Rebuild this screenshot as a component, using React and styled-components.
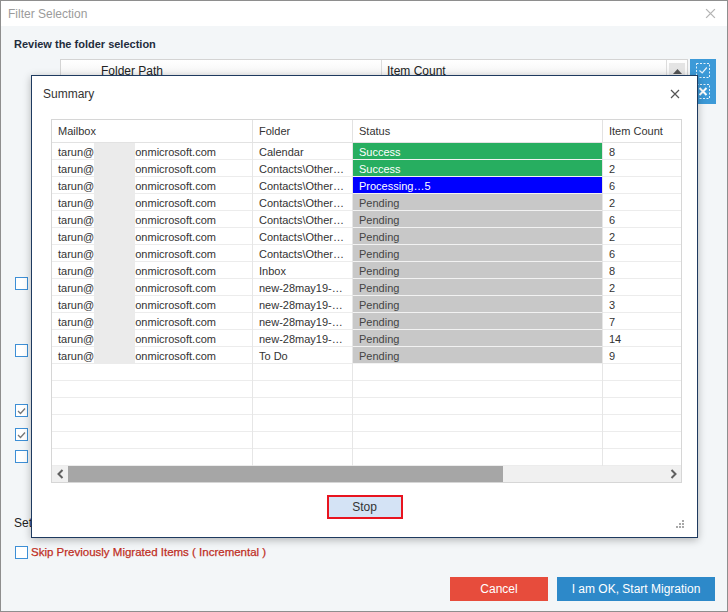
import React from "react";
import styled, { createGlobalStyle } from "styled-components";

const GlobalStyle = createGlobalStyle`
  html, body {
    margin: 0;
    padding: 0;
    background: #fff;
  }
  body {
    font-family: "Liberation Sans", Arial, sans-serif;
  }
  * {
    box-sizing: border-box;
  }
`;

const Window = styled.div`
  position: relative;
  width: 728px;
  height: 612px;
  border: 1px solid #8e8e8e;
  background: #f3f6f8;
  display: flex;
  flex-direction: column;
  overflow: hidden;
`;

const TitleBar = styled.div`
  height: 25px;
  flex-shrink: 0;
  background: #fff;
  display: flex;
  align-items: center;
  justify-content: space-between;
  padding: 0 11px 0 7px;
  color: #9b9b9b;
  font-size: 12px;
`;

const Body = styled.div`
  flex: 1;
  display: flex;
  flex-direction: column;
  padding: 0 11px 0 13px;
`;

const Heading = styled.div`
  margin-top: 10px;
  font-size: 11px;
  font-weight: bold;
  line-height: 16px;
  color: #1f2d3d;
`;

const FolderRow = styled.div`
  display: flex;
  gap: 2px;
  margin: 7px 0 0 46px;
`;

const FolderPanel = styled.div`
  width: 628px;
  height: 200px;
  border: 1px solid #d4d4d4;
  background: #fff;
`;

const PanelHeader = styled.div`
  height: 23px;
  display: flex;
  background: linear-gradient(#ffffff, #f1f1f1);
  border-bottom: 1px solid #e2e2e2;
  font-size: 12px;
  color: #222;
`;

const PanelCol = styled.div`
  width: ${({ $w }) => ($w ? `${$w}px` : "auto")};
  flex: ${({ $w }) => ($w ? "none" : "1")};
  padding-left: ${({ $pl }) => $pl}px;
  border-right: 1px solid #dcdcdc;
  line-height: 23px;
`;

const PanelScroll = styled.div`
  width: 20px;
  display: flex;
  align-items: center;
  justify-content: center;
`;

const ArrowBox = styled.div`
  width: 16px;
  height: 16px;
  background: #e4e4e4;
  display: flex;
  align-items: center;
  justify-content: center;
`;

const IconColumn = styled.div`
  width: 26px;
  height: 45px;
  background: #3c9ad8;
`;

const OptionRow = styled.div`
  display: flex;
  align-items: center;
  gap: 3px;
  margin: ${({ $mt }) => $mt}px 0 0 1px;
  height: ${({ $h }) => $h || 13}px;
`;

const Check = styled.span`
  width: 13px;
  height: 13px;
  flex-shrink: 0;
  border: 1px solid #3d8fd6;
  background: #fff;
  display: flex;
  align-items: center;
  justify-content: center;
`;

const SettingsLabel = styled.div`
  margin-top: 52px;
  font-size: 12px;
  line-height: 16px;
  color: #222;
`;

const SkipLabel = styled.span`
  font-size: 11.5px;
  color: #bf2f25;
  line-height: 16px;
  -webkit-text-stroke: 0.25px #bf2f25;
`;

const Footer = styled.div`
  margin-top: 17px;
  display: flex;
  justify-content: flex-end;
  gap: 9px;
  padding-right: 1px;
`;

const ActionButton = styled.button`
  width: ${({ $w }) => $w}px;
  height: 24px;
  border: none;
  background: ${({ $bg }) => $bg};
  color: #fff;
  font-family: "Liberation Sans", Arial, sans-serif;
  font-size: 12px;
  padding: 0;
`;

/* Summary modal */
const Dialog = styled.div`
  position: absolute;
  left: 30px;
  top: 74px;
  width: 667px;
  height: 463px;
  border: 1px solid #1e3a5f;
  background: #fff;
  box-shadow: 0 2px 8px rgba(0, 0, 0, 0.28);
  display: flex;
  flex-direction: column;
`;

const DialogHeader = styled.div`
  height: 36px;
  flex-shrink: 0;
  display: flex;
  align-items: center;
  justify-content: space-between;
  padding: 0 17px 0 11px;
  font-size: 12px;
  color: #333;
`;

const Grid = styled.div`
  width: 631px;
  height: 364px;
  margin: 7px 0 0 19px;
  border: 1px solid #d6d6d6;
  display: flex;
  flex-direction: column;
  overflow: hidden;
`;

const Row = styled.div`
  display: flex;
  height: ${({ $h }) => $h || 17}px;
  flex-shrink: 0;
`;

const HeadCell = styled.div`
  width: ${({ $w }) => $w}px;
  flex-shrink: 0;
  padding-left: 6px;
  border-right: 1px solid #e2e2e2;
  border-bottom: 1px solid #e2e2e2;
  line-height: 22px;
  font-size: 11px;
  color: #333;
  white-space: nowrap;
  overflow: hidden;
`;

const Cell = styled.div`
  width: ${({ $w }) => $w}px;
  flex-shrink: 0;
  display: flex;
  padding-left: 6px;
  border-right: 1px solid #e6e6e6;
  background: linear-gradient(
    to top,
    ${({ $line }) => $line || "#ececec"} 1px,
    ${({ $bg }) => $bg || "#fff"} 1px
  );
  color: ${({ $color }) => $color || "#333"};
  font-size: 11px;
  line-height: 18px;
  white-space: nowrap;
  overflow: hidden;
`;

const Redact = styled.span`
  width: 41px;
  height: 17px;
  flex-shrink: 0;
  background: #ebebeb;
`;

const ScrollBar = styled.div`
  height: 16px;
  flex-shrink: 0;
  display: flex;
  background: #f0f0f0;
  margin-top: auto;
`;

const ScrollArrow = styled.div`
  width: 16px;
  display: flex;
  align-items: center;
  justify-content: center;
`;

const Thumb = styled.div`
  width: 435px;
  background: #a6a6a6;
`;

const Track = styled.div`
  flex: 1;
`;

const StopButton = styled.button`
  align-self: center;
  margin-top: 12px;
  width: 76px;
  height: 24px;
  border: 2px solid #e8141f;
  background: #d4e3f5;
  color: #333;
  font-family: "Liberation Sans", Arial, sans-serif;
  font-size: 12px;
  padding: 0;
`;

const GripRow = styled.div`
  margin-top: auto;
  display: flex;
  justify-content: flex-end;
  padding: 0 13px 9px 0;
`;

const COLS = [201, 100, 250, 80];

const STATUS = {
  Success: { bg: "#27ae60", color: "#fff", line: "#f2f2f2" },
  Processing: { bg: "#0000ff", color: "#fff", line: "#f2f2f2" },
  Pending: { bg: "#c8c8c8", color: "#444", line: "#f2f2f2" },
};

const rows = [
  ["Calendar", "Success", "Success", 8],
  ["Contacts\\Other…", "Success", "Success", 2],
  ["Contacts\\Other…", "Processing", "Processing…5", 6],
  ["Contacts\\Other…", "Pending", "Pending", 2],
  ["Contacts\\Other…", "Pending", "Pending", 6],
  ["Contacts\\Other…", "Pending", "Pending", 2],
  ["Contacts\\Other…", "Pending", "Pending", 6],
  ["Inbox", "Pending", "Pending", 8],
  ["new-28may19-…", "Pending", "Pending", 2],
  ["new-28may19-…", "Pending", "Pending", 3],
  ["new-28may19-…", "Pending", "Pending", 7],
  ["new-28may19-…", "Pending", "Pending", 14],
  ["To Do", "Pending", "Pending", 9],
];

const CloseIcon = ({ size = 10, color = "#555", width = 1.3 }) => (
  <svg width={size} height={size} viewBox="0 0 10 10">
    <path d="M1 1 L9 9 M9 1 L1 9" stroke={color} strokeWidth={width} fill="none" />
  </svg>
);

const Tick = () => (
  <svg width="9" height="8" viewBox="0 0 9 8">
    <path d="M1 4 L3.5 6.5 L8 1.5" stroke="#777" strokeWidth="1.3" fill="none" />
  </svg>
);

const Chevron = ({ dir }) => (
  <svg width="7" height="10" viewBox="0 0 7 10">
    <path
      d={dir === "left" ? "M5.5 1 L1.5 5 L5.5 9" : "M1.5 1 L5.5 5 L1.5 9"}
      stroke="#606060"
      strokeWidth="2"
      fill="none"
    />
  </svg>
);

const SelectIcons = () => (
  <svg width="26" height="45" viewBox="0 0 26 45">
    <rect x="6.5" y="4.5" width="13" height="14" fill="none" stroke="#e6f2fb" strokeDasharray="2 1.5" />
    <path d="M9.5 11.5 L12.2 14 L16.8 8.5" stroke="#e6f2fb" strokeWidth="1.2" fill="none" />
    <rect x="6.5" y="25.5" width="13" height="14" fill="none" stroke="#e6f2fb" strokeDasharray="2 1.5" />
    <path d="M9.5 29 L16.5 36 M16.5 29 L9.5 36" stroke="#fff" strokeWidth="2" fill="none" />
  </svg>
);

const Grip = () => (
  <svg width="8" height="8" viewBox="0 0 8 8" fill="#a8a8a8">
    <rect x="6" y="0" width="2" height="2" />
    <rect x="3" y="3" width="2" height="2" />
    <rect x="6" y="3" width="2" height="2" />
    <rect x="0" y="6" width="2" height="2" />
    <rect x="3" y="6" width="2" height="2" />
    <rect x="6" y="6" width="2" height="2" />
  </svg>
);

export default function App() {
  return (
    <>
      <GlobalStyle />
      <Window>
        <TitleBar>
          <span>Filter Selection</span>
          <CloseIcon size={11} color="#b4b4b4" width={1.2} />
        </TitleBar>

        <Body>
          <Heading>Review the folder selection</Heading>

          <FolderRow>
            <FolderPanel>
              <PanelHeader>
                <PanelCol $w={321} $pl={40}>Folder Path</PanelCol>
                <PanelCol $pl={5}>Item Count</PanelCol>
                <PanelScroll>
                  <ArrowBox>
                    <svg width="9" height="5" viewBox="0 0 9 5">
                      <path d="M0 5 L4.5 0 L9 5 Z" fill="#555" />
                    </svg>
                  </ArrowBox>
                </PanelScroll>
              </PanelHeader>
            </FolderPanel>
            <IconColumn>
              <SelectIcons />
            </IconColumn>
          </FolderRow>

          <OptionRow $mt={18}><Check /></OptionRow>
          <OptionRow $mt={54}><Check /></OptionRow>
          <OptionRow $mt={47}><Check><Tick /></Check></OptionRow>
          <OptionRow $mt={11}><Check><Tick /></Check></OptionRow>
          <OptionRow $mt={9}><Check /></OptionRow>

          <SettingsLabel>Settings</SettingsLabel>

          <OptionRow $mt={13} $h={16}>
            <Check />
            <SkipLabel>Skip Previously Migrated Items ( Incremental )</SkipLabel>
          </OptionRow>

          <Footer>
            <ActionButton $w={98} $bg="#e74c3c">Cancel</ActionButton>
            <ActionButton $w={158} $bg="#2d89c9">I am OK, Start Migration</ActionButton>
          </Footer>
        </Body>

        <Dialog>
          <DialogHeader>
            <span>Summary</span>
            <CloseIcon size={10} color="#555" width={1.2} />
          </DialogHeader>

          <Grid>
            <Row $h={23}>
              <HeadCell $w={COLS[0]}>Mailbox</HeadCell>
              <HeadCell $w={COLS[1]}>Folder</HeadCell>
              <HeadCell $w={COLS[2]}>Status</HeadCell>
              <HeadCell $w={COLS[3]}>Item Count</HeadCell>
            </Row>

            {rows.map(([folder, kind, label, count], i) => {
              const s = STATUS[kind];
              return (
                <Row key={i}>
                  <Cell $w={COLS[0]}>
                    <span>tarun@</span>
                    <Redact />
                    <span>onmicrosoft.com</span>
                  </Cell>
                  <Cell $w={COLS[1]}>{folder}</Cell>
                  <Cell $w={COLS[2]} $bg={s.bg} $color={s.color} $line={s.line}>
                    {label}
                  </Cell>
                  <Cell $w={COLS[3]}>{count}</Cell>
                </Row>
              );
            })}

            {Array.from({ length: 6 }).map((_, i) => (
              <Row key={`e${i}`}>
                {COLS.map((w, j) => (
                  <Cell key={j} $w={w} />
                ))}
              </Row>
            ))}

            <ScrollBar>
              <ScrollArrow><Chevron dir="left" /></ScrollArrow>
              <Thumb />
              <Track />
              <ScrollArrow><Chevron dir="right" /></ScrollArrow>
            </ScrollBar>
          </Grid>

          <StopButton>Stop</StopButton>

          <GripRow>
            <Grip />
          </GripRow>
        </Dialog>
      </Window>
    </>
  );
}
